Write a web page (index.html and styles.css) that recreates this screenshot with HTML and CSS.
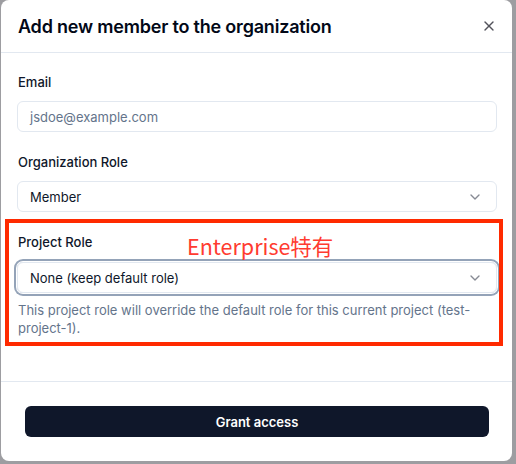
FILE: index.html
```html
<!DOCTYPE html>
<html lang="en">
<head>
<meta charset="utf-8">
<link rel="stylesheet" href="styles.css">
</head>
<body>
<div class="dialog">
  <div class="header">
    <h2 class="title">Add new member to the organization</h2>
    <span class="close">
      <svg width="16" height="16" viewBox="0 0 24 24" fill="none" stroke="currentColor" stroke-width="2" stroke-linecap="round" stroke-linejoin="round"><path d="M18 6 6 18"/><path d="m6 6 12 12"/></svg>
    </span>
  </div>
  <div class="body">
    <div class="field">
      <label class="label">Email</label>
      <div class="input placeholder">jsdoe@example.com</div>
    </div>
    <div class="field">
      <label class="label">Organization Role</label>
      <div class="input select"><span>Member</span>
        <svg class="chev" width="16" height="16" viewBox="0 0 24 24" fill="none" stroke="currentColor" stroke-width="2" stroke-linecap="round" stroke-linejoin="round"><path d="m6 9 6 6 6-6"/></svg>
      </div>
    </div>
    <div class="field">
      <label class="label">Project Role</label>
      <div class="input select focused"><span>None (keep default role)</span>
        <svg class="chev" width="16" height="16" viewBox="0 0 24 24" fill="none" stroke="currentColor" stroke-width="2" stroke-linecap="round" stroke-linejoin="round"><path d="m6 9 6 6 6-6"/></svg>
      </div>
      <p class="help">This project role will override the default role for this current project (test-project-1).</p>
    </div>
  </div>
  <div class="footer">
    <button class="btn">Grant access</button>
  </div>
  <div class="annot-box"></div>
  <div class="annot-text">Enterprise特有</div>
</div>
</body>
</html>
```

FILE: styles.css
```css
* { box-sizing: border-box; }
html, body { margin: 0; padding: 0; }
body {
  background: #9d9da1;
  width: 516px;
  height: 464px;
  overflow: hidden;
  font-family: Inter, "Noto Sans", "Noto Sans CJK SC", sans-serif;
  color: #0f172a;
}
.dialog {
  position: relative;
  margin-left: 1px;
  width: 511px;
  height: 461px;
  background: #fff;
  border-radius: 8px;
  display: flex;
  flex-direction: column;
}
.header {
  height: 53px;
  border-bottom: 1px solid #e2e8f0;
  display: flex;
  align-items: center;
  justify-content: space-between;
  padding: 0 15px 0 17px;
}
.title {
  margin: 0;
  font-size: 18px;
  font-weight: 600;
  letter-spacing: -0.2px;
  color: #020817;
}
.close {
  display: flex;
  color: #52525b;
}
.body {
  padding: 19px 15px 0 16px;
  display: flex;
  flex-direction: column;
  gap: 20px;
  height: 328px;
}
.field { display: flex; flex-direction: column; }
.label {
  font-size: 13px;
  font-weight: 500;
  line-height: 20px;
  margin-bottom: 9px;
  padding-left: 1px;
}
.input {
  height: 31px;
  border: 1px solid #e2e8f0;
  border-radius: 6px;
  padding: 0 12px;
  display: flex;
  align-items: center;
  font-size: 13px;
}
.placeholder { color: #64748b; }
.select { justify-content: space-between; }
.chev { opacity: .5; color: #0f172a; margin-right: 1px; }
.focused {
  margin-top: 1px;
  box-shadow: 0 0 0 1px #fff, 0 0 0 3px #94a3b8;
}
.help {
  margin: 8px 0 0 1px;
  font-size: 13px;
  line-height: 18px;
  color: #64748b;
}
.footer {
  border-top: 1px solid #e2e8f0;
  padding: 24px 23px 0 24px;
}
.btn {
  width: 100%;
  height: 31px;
  border: none;
  border-radius: 6px;
  background: #0f172a;
  color: #fff;
  font-family: inherit;
  font-size: 13px;
  font-weight: 600;
}
.annot-box {
  position: absolute;
  left: 4px;
  top: 219px;
  width: 498px;
  height: 127px;
  border: 4px solid #ff2a00;
}
.annot-text {
  position: absolute;
  left: 186px;
  top: 233px;
  font-family: "Noto Sans CJK SC", sans-serif;
  font-size: 21.5px;
  line-height: 26px;
  color: #ff3b30;
}
```
